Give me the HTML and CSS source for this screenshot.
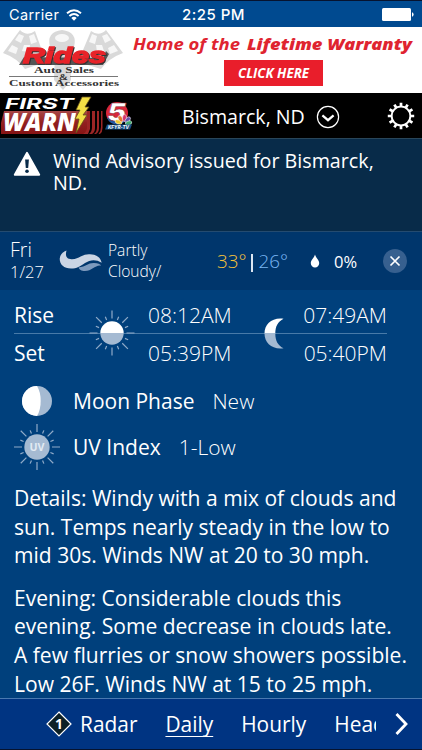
FILE: index.html
```html
<!DOCTYPE html>
<html lang="en">
  <head>
    <meta charset="utf-8">
    <title>First Warn Weather</title>
    <link rel="stylesheet" href="styles.css">
  </head>
  <body>
    <div class="status-bar">
      <div class="carrier">
        <span>Carrier</span>
        <svg width="16" height="12" viewBox="0 0 16 12">
          <path d="M1 4.3 Q8 -2 15 4.3" fill="none" stroke="#fff" stroke-width="1.9"/>
          <path d="M3.4 7 Q8 2.8 12.6 7" fill="none" stroke="#fff" stroke-width="1.9"/>
          <path d="M5.3 8.9 Q8 6.6 10.7 8.9 L8 11.8 Z" fill="#fff"/>
        </svg>
      </div>
      <span class="clock">2:25 PM</span>
      <svg class="battery" width="32" height="13" viewBox="0 0 32 13">
        <rect x="0" y="0" width="29" height="13" rx="1.5" fill="#fff"/>
        <path d="M30 4.3 Q31.6 4.8 31.6 6.5 Q31.6 8.2 30 8.7 Z" fill="#fff"/>
      </svg>
    </div>

    <div class="ad">
      <svg class="ad-logo" width="130" height="66" viewBox="0 0 130 66">
        <!-- checkered flags and piston -->
        <g fill="#d9d9d9">
          <path d="M3 26 L20 3 Q27 10 35 4 L46 35 L25 42 Q17 31 3 26 Z"/>
          <path d="M123 26 L106 3 Q99 10 91 4 L78 35 L101 42 Q109 31 123 26 Z"/>
          <path d="M50 20 Q46 5 62 3 Q78 5 74 20 L70 25 L71 53 L63 63 L54 53 L55 25 Z"/>
        </g>
        <g fill="#f7f7f7">
          <path d="M19 7 L24 9 L21 16 L15 13 Z M29 9 L34 7 L37 15 L31 17 Z M12 18 L18 21 L16 27 L8 24 Z M24 18 L30 18 L29 25 L22 24 Z"/>
          <path d="M107 7 L102 9 L105 16 L111 13 Z M97 9 L92 7 L89 15 L95 17 Z M114 18 L108 21 L110 27 L118 24 Z M102 18 L96 18 L97 25 L104 24 Z"/>
          <ellipse cx="62" cy="11" rx="7" ry="4"/>
        </g>
        <path d="M24 30 L19 38 L103 38 L109 27 L106 24 L103 31 Z" fill="#555"/>
        <text class="rides" x="23" y="36" textLength="83" lengthAdjust="spacingAndGlyphs">Rides</text>
        <text class="ad-sub" x="34" y="46" textLength="60" lengthAdjust="spacingAndGlyphs">Auto Sales</text>
        <text class="ad-sub ampersand" x="59" y="53" textLength="9" lengthAdjust="spacingAndGlyphs">&amp;</text>
        <path d="M9 49.5 H58 M70 49.5 H118" stroke="#555" stroke-width="0.8"/>
        <text class="ad-sub" x="9" y="59" textLength="110" lengthAdjust="spacingAndGlyphs">Custom Accessories</text>
      </svg>
      <div class="ad-copy">
        <svg width="282" height="32" viewBox="0 0 282 32">
          <text class="ad-headline" x="0" y="22.5" textLength="107" lengthAdjust="spacingAndGlyphs">Home of the</text>
          <text class="ad-headline heavy" x="114" y="22.5" textLength="165" lengthAdjust="spacingAndGlyphs">Lifetime Warranty</text>
        </svg>
        <div class="ad-button">
          <svg width="76" height="20" viewBox="0 0 76 20">
            <text class="ad-click" x="2" y="14.7" textLength="71" lengthAdjust="spacingAndGlyphs">CLICK HERE</text>
          </svg>
        </div>
      </div>
    </div>

    <div class="header">
      <svg class="brand" width="136" height="45" viewBox="0 0 136 45">
        <defs>
          <linearGradient id="red" x1="0" y1="0" x2="0" y2="1">
            <stop offset="0" stop-color="#a84848"/>
            <stop offset="0.5" stop-color="#922020"/>
            <stop offset="1" stop-color="#861414"/>
          </linearGradient>
        </defs>
        <path d="M4 18 H88 V41 H1 V30 Z" fill="url(#red)"/>
        <path d="M87 18 H90 V36 L88 41 H83 Q87 39 87 34 Z M92 18 H95 V35 Q95 39 92 41 H89 Q92 39 92 34 Z M97 18 H99 V35 Q99 39 96 41 H94 Q97 39 97 34 Z M101 18 H102.5 V35 Q102.5 39 100 41 H98.5 Q101 38 101 34 Z" fill="#9c2525"/>
        <text class="first" x="5" y="16" textLength="69" lengthAdjust="spacingAndGlyphs">FIRST</text>
        <text class="warn" x="3" y="38" textLength="73" lengthAdjust="spacingAndGlyphs">WARN</text>
        <path d="M82 4 L91 4 L85 14 L89 14 L83 22 L87 22 L76 40 L79 26 L75 26 L80 17 L76 17 Z" fill="#f3df45" stroke="#65501b" stroke-width="0.8"/>
        <circle cx="117" cy="20" r="11" fill="#d9273a"/>
        <path d="M107 25 A11 11 0 0 0 127 25 Z" fill="#2159a5"/>
        <text class="five" x="107" y="28" textLength="19" lengthAdjust="spacingAndGlyphs">5</text>
        <g stroke="#fff" stroke-width="0.5">
          <ellipse cx="118.5" cy="29" rx="3.6" ry="2" fill="#edc62f" transform="rotate(20 118.5 29)"/>
          <ellipse cx="120.5" cy="25.8" rx="3.5" ry="2" fill="#e67930" transform="rotate(60 120.5 25.8)"/>
          <ellipse cx="124.5" cy="25" rx="3.5" ry="2" fill="#d4376e" transform="rotate(95 124.5 25)"/>
          <ellipse cx="127.7" cy="26.8" rx="3.5" ry="2" fill="#6754ad" transform="rotate(130 127.7 26.8)"/>
          <ellipse cx="128.6" cy="30" rx="3.3" ry="2" fill="#3eaa70" transform="rotate(160 128.6 30)"/>
        </g>
        <path d="M107 31.5 H132 L130 36.5 H105 Z" fill="#174e83"/>
        <text class="kfyr" x="108" y="36" textLength="21" lengthAdjust="spacingAndGlyphs">KFYR-TV</text>
      </svg>
      <div class="location">
        <span>Bismarck, ND</span>
        <svg width="24" height="24" viewBox="0 0 24 24" fill="none" stroke="#fff">
          <circle cx="12" cy="12" r="10.6" stroke-width="1.2"/>
          <path d="M6.4 10.3 L12 15.2 L17.6 10.3" stroke-width="2.2"/>
        </svg>
      </div>
      <svg class="gear" width="28" height="28" viewBox="-14 -14 28 28" fill="none" stroke="#fff">
        <circle r="9.4" stroke-width="2"/>
        <g stroke-width="2.7">
          <path d="M0 -9.5 V-13.2 M0 9.5 V13.2 M-9.5 0 H-13.2 M9.5 0 H13.2"/>
          <path d="M0 -9.5 V-13.2 M0 9.5 V13.2 M-9.5 0 H-13.2 M9.5 0 H13.2" transform="rotate(30)"/>
          <path d="M0 -9.5 V-13.2 M0 9.5 V13.2 M-9.5 0 H-13.2 M9.5 0 H13.2" transform="rotate(60)"/>
        </g>
      </svg>
    </div>

    <div class="alert">
      <svg width="28" height="26" viewBox="0 0 28 26">
        <path d="M14 2.8 L26.3 24.8 H1.7 Z" fill="#fff" stroke="#fff" stroke-width="1.8" stroke-linejoin="round"/>
        <path d="M12.1 9.5 H15.9 L15.2 18 H12.8 Z" fill="#082b49"/>
        <circle cx="14" cy="21.2" r="1.8" fill="#082b49"/>
      </svg>
      <p>Wind Advisory issued for Bismarck, ND.</p>
    </div>

    <div class="day">
      <div class="date"><span class="weekday">Fri</span><span class="monthday">1/27</span></div>
      <svg class="wind" width="44" height="22" viewBox="0 0 44 22">
        <path d="M19.5 17.5 C27 16.5 29 12.8 35 13 C39 13 41 14 42.2 15.5 C36 14.5 33 21 26 21 C22 21 20.5 19.5 19.5 17.5 Z" fill="#7d9abd"/>
        <path d="M7.5 0.5 C6 6 7.5 9.5 13 9.3 C21 8.5 23 3.7 31 4.2 C38 4.5 41.5 7.5 42.7 12.7 C37 9 31 9.5 26 13 C21 16.5 18 18.5 12 18.5 C5 18.5 0.7 14.5 0.7 8.7 C1.2 4.5 3.5 2 7.5 0.5 Z" fill="#cbd5e4"/>
      </svg>
      <div class="sky">Partly Cloudy/</div>
      <div class="temps"><span class="high">33°</span><span class="divider"></span><span class="low">26°</span></div>
      <svg class="drop" width="10" height="14" viewBox="0 0 10 14">
        <path d="M5 0.5 C6 4 9.2 6 9.2 9.3 A4.2 4.2 0 0 1 0.8 9.3 C0.8 6 4 4 5 0.5 Z" fill="#fff"/>
      </svg>
      <span class="precip">0%</span>
      <svg class="close" width="24" height="24" viewBox="0 0 24 24">
        <circle cx="12" cy="12" r="12" fill="#37608f"/>
        <path d="M7.5 7.5 L16.5 16.5 M16.5 7.5 L7.5 16.5" stroke="#fff" stroke-width="1.7"/>
      </svg>
    </div>

    <div class="detail">
      <div class="sun-moon">
        <div class="row">
          <span class="label">Rise</span><span class="time">08:12AM</span><span class="time moon-time">07:49AM</span>
        </div>
        <div class="row">
          <span class="label">Set</span><span class="time">05:39PM</span><span class="time moon-time">05:40PM</span>
        </div>
        <svg class="sun" width="46" height="46" viewBox="-23 -23 46 46">
          <g stroke="#8faac8" stroke-width="1.2">
            <path d="M0 -22.5 V-14.5 M0 22.5 V14.5 M-22.5 0 H-14.5 M22.5 0 H14.5"/>
            <path d="M0 -22.5 V-14.5 M0 22.5 V14.5 M-22.5 0 H-14.5 M22.5 0 H14.5" transform="rotate(45)"/>
            <path d="M0 -17.5 V-14 M0 17.5 V14 M-17.5 0 H-14 M17.5 0 H14" transform="rotate(22.5)"/>
            <path d="M0 -17.5 V-14 M0 17.5 V14 M-17.5 0 H-14 M17.5 0 H14" transform="rotate(67.5)"/>
          </g>
          <path d="M-11.7 0 A11.7 11.7 0 0 1 11.7 0 Z" fill="#fff"/>
          <path d="M-11.7 0 A11.7 11.7 0 0 0 11.7 0 Z" fill="#a5bad2"/>
        </svg>
        <svg class="moon" width="20" height="31" viewBox="0 0 20 31">
          <path d="M19.5 0.7 C14 3.5 11.3 8 11.3 15.5 H0.5 C0.5 6 8 -0.8 19.5 0.7 Z" fill="#fff"/>
          <path d="M19.5 30.3 C14 27.5 11.3 23 11.3 15.5 H0.5 C0.5 25 8 31.8 19.5 30.3 Z" fill="#a5bad2"/>
        </svg>
      </div>

      <div class="fact">
        <svg width="46" height="46" viewBox="-23 -23 46 46">
          <circle r="15" fill="#a5bad2"/>
          <path d="M0 -15 A15 15 0 0 0 0 15 Q3.7 9 3.7 0 Q3.7 -9 0 -15 Z" fill="#fff"/>
        </svg>
        <span class="fact-name">Moon Phase</span><span class="fact-value">New</span>
      </div>
      <div class="fact">
        <svg width="46" height="46" viewBox="-23 -23 46 46">
          <g stroke="#8faac8" stroke-width="1.2">
            <path d="M0 -23 V-15 M0 23 V15 M-23 0 H-15 M23 0 H15"/>
            <path d="M0 -23 V-15 M0 23 V15 M-23 0 H-15 M23 0 H15" transform="rotate(45)"/>
            <path d="M0 -18 V-14.5 M0 18 V14.5 M-18 0 H-14.5 M18 0 H14.5" transform="rotate(22.5)"/>
            <path d="M0 -18 V-14.5 M0 18 V14.5 M-18 0 H-14.5 M18 0 H14.5" transform="rotate(67.5)"/>
          </g>
          <circle r="12.7" fill="#a5bad2"/>
          <text class="uv" x="0" y="4" textLength="15" lengthAdjust="spacingAndGlyphs">UV</text>
        </svg>
        <span class="fact-name">UV Index</span><span class="fact-value">1-Low</span>
      </div>

      <p class="forecast">Details: Windy with a mix of clouds and<br>sun. Temps nearly steady in the low to<br>mid 30s. Winds NW at 20 to 30 mph.</p>
      <p class="forecast">Evening: Considerable clouds this<br>evening. Some decrease in clouds late.<br>A few flurries or snow showers possible.<br>Low 26F. Winds NW at 15 to 25 mph.</p>
    </div>

    <div class="nav">
      <svg class="badge" width="26" height="26" viewBox="-13 -13 26 26">
        <path d="M0 -12 L12 0 L0 12 L-12 0 Z" fill="#0d2026" stroke="#fff" stroke-width="1.2"/>
        <text class="badge-number" x="0" y="5">1</text>
      </svg>
      <div class="tabs">
        <span class="tab">Radar</span>
        <span class="tab active">Daily</span>
        <span class="tab">Hourly</span>
        <span class="tab">Headlines</span>
      </div>
      <svg class="next" width="14" height="22" viewBox="0 0 14 22">
        <path d="M1.5 1 L11 11 L1.5 21" fill="none" stroke="#fff" stroke-width="2.8"/>
      </svg>
    </div>
  </body>
</html>
```

FILE: styles.css
```css
* {
  box-sizing: border-box;
}
body {
  margin: 0;
  width: 422px;
  height: 750px;
  overflow: hidden;
  display: flex;
  flex-direction: column;
  font-family: "Open Sans", sans-serif;
  color: #fff;
  background: #00407c;
}
p {
  margin: 0;
}
svg {
  display: block;
  flex: none;
}
/* Phone status bar */
.status-bar {
  height: 27px;
  flex: none;
  display: grid;
  grid-template-columns: 1fr auto 1fr;
  align-items: center;
  padding: 1px 8px 0 9px;
  border-top: 1px solid #06132f;
  background: #004a90;
  font: 14.5px Inter, sans-serif;
}
.carrier {
  display: flex;
  align-items: center;
  gap: 7px;
  letter-spacing: 0.4px;
}
.clock {
  padding-left: 4px;
  font-size: 15px;
  font-weight: 500;
  letter-spacing: 0.5px;
}
.battery {
  justify-self: end;
}
/* Banner ad */
.ad {
  height: 66px;
  flex: none;
  display: flex;
  background: #fff;
}
.ad-copy {
  margin-left: 3px;
}
.rides {
  font: italic bold 22px "Liberation Sans", sans-serif;
  fill: #e82329;
  stroke: #e82329;
  stroke-width: 1.4px;
  filter: drop-shadow(1px 1px 0 #333);
}
.ad-sub {
  font: bold 8.5px "Liberation Serif", serif;
  fill: #333;
}
.ampersand {
  font-size: 8px;
}
.ad-headline {
  font: italic bold 16px "Open Sans", sans-serif;
  fill: #df2430;
}
.heavy {
  font-weight: 800;
}
.ad-button {
  width: 99px;
  height: 26px;
  margin: 1px 0 0 91px;
  display: flex;
  align-items: center;
  justify-content: center;
  background: #e91e2b;
}
.ad-click {
  font: italic bold 13.5px "Open Sans", sans-serif;
  fill: #fff;
}
/* Header with logo and location */
.header {
  height: 45px;
  flex: none;
  display: flex;
  align-items: center;
  background: #000;
}
.first {
  font: italic bold 15px Inter, sans-serif;
  fill: #fff;
}
.warn {
  font: italic 800 25px "Open Sans", sans-serif;
  fill: #fff;
}
.five {
  font: italic 900 24px Inter, sans-serif;
  fill: #fff;
  stroke: #8c2432;
  stroke-width: 0.5px;
}
.kfyr {
  font: italic bold 5px Inter, sans-serif;
  fill: #fff;
}
.location {
  display: flex;
  align-items: center;
  gap: 11px;
  margin-left: 46px;
  padding-top: 2px;
  font-size: 19.6px;
}
.gear {
  margin-left: auto;
  margin-right: 7px;
}
/* Advisory */
.alert {
  height: 93px;
  flex: none;
  display: flex;
  gap: 12px;
  padding: 11px 24px 0 13px;
  border-top: 1px solid #29465a;
  background: #082b49;
  font-size: 19.7px;
  line-height: 21.5px;
}
/* Day summary row */
.day {
  height: 59px;
  flex: none;
  display: flex;
  align-items: center;
  border-top: 1px solid #244b70;
  background: #00366c;
}
.date {
  width: 50px;
  padding-left: 10px;
  display: flex;
  flex-direction: column;
  font-weight: 300;
  line-height: 22px;
}
.weekday {
  font-size: 19.5px;
}
.monthday {
  font-size: 16.5px;
}
.wind {
  margin-left: 9px;
}
.sky {
  width: 62px;
  margin-left: 5px;
  font-size: 15.6px;
  font-weight: 300;
  line-height: 21.5px;
}
.temps {
  display: flex;
  align-items: center;
  margin-left: 47px;
  font-size: 18.8px;
  font-weight: 300;
}
.high {
  color: #f6c33c;
}
.divider {
  width: 2px;
  height: 18px;
  margin: 3px 5px 0 5px;
  background: #dce6f2;
}
.low {
  color: #7bb6f5;
}
.drop {
  margin-left: 22px;
}
.precip {
  margin-left: 14px;
  font-size: 16.5px;
}
.close {
  margin-left: auto;
  margin-right: 15px;
}
/* Expanded day */
.detail {
  flex: 1;
  min-height: 0;
  overflow: hidden;
  padding-left: 14px;
}
.sun-moon {
  position: relative;
  width: 373px;
  height: 88px;
  padding-top: 5px;
}
.row {
  display: flex;
  height: 37px;
  align-items: center;
  font-size: 21px;
}
.row:first-child {
  height: 39px;
  padding-top: 1px;
  border-bottom: 1px solid #487aa8;
}
.label {
  width: 134px;
}
.time {
  font-weight: 300;
}
.moon-time {
  margin-left: auto;
}
.sun {
  position: absolute;
  left: 75px;
  top: 20px;
}
.moon {
  position: absolute;
  left: 250px;
  top: 28px;
}
.fact {
  display: flex;
  align-items: center;
  height: 46px;
  font-size: 21px;
}
.fact-name {
  margin-left: 13px;
}
.fact-value {
  margin-left: 18px;
  font-weight: 300;
}
.uv {
  font: bold 11px "Open Sans", sans-serif;
  fill: #e2eaf3;
  text-anchor: middle;
}
.forecast {
  margin-top: 14px;
  font-size: 21.05px;
  line-height: 28.6px;
  white-space: nowrap;
}
/* Bottom navigation */
.nav {
  height: 52px;
  flex: none;
  display: flex;
  align-items: center;
  border-top: 1px solid #4a79b0;
  border-bottom: 1px solid #06132f;
  background: #003482;
}
.badge {
  margin-left: 46px;
}
.badge-number {
  font: bold 14px "Open Sans", sans-serif;
  fill: #fff;
  text-anchor: middle;
}
.tabs {
  display: flex;
  gap: 28px;
  width: 296px;
  margin-left: 8px;
  overflow: hidden;
  font-size: 20.9px;
}
.tab {
  height: 29px;
  line-height: 29px;
}
.active {
  text-decoration: underline;
  text-decoration-thickness: 1px;
  text-decoration-skip-ink: none;
  text-underline-offset: 4px;
}
.next {
  margin-left: 19px;
}
```
